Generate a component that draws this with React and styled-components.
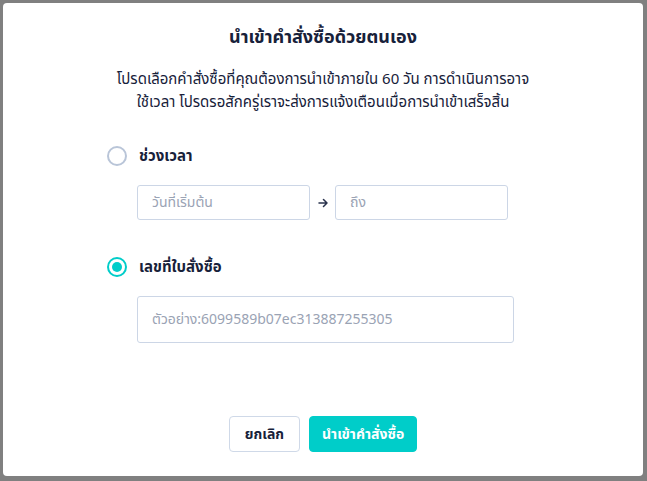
import { useState } from 'react';
import styled, { createGlobalStyle } from 'styled-components';

const GlobalStyle = createGlobalStyle`
  html, body {
    margin: 0;
    padding: 0;
    background: #808080;
  }
  body {
    font-family: "Noto Sans Thai", "Noto Sans", "DejaVu Sans", sans-serif;
    color: #17213a;
  }
  * { box-sizing: border-box; }
`;

const Overlay = styled.div`
  width: 647px;
  height: 481px;
  padding: 3px 4px 5px 3px;
  display: flex;
`;

const Modal = styled.div`
  flex: 1;
  background: #fff;
  border-radius: 4px;
  display: flex;
  flex-direction: column;
  padding: 23px 0 24px;
`;

const Title = styled.h2`
  margin: 0;
  font-size: 18px;
  line-height: 24px;
  font-weight: 700;
  text-align: center;
`;

const Description = styled.p`
  margin: 18px 0 0;
  font-size: 15px;
  line-height: 23px;
  text-align: center;
`;

const Form = styled.div`
  margin-top: 30px;
  padding-left: 104px;
  display: flex;
  flex-direction: column;
`;

const OptionRow = styled.label`
  display: flex;
  align-items: center;
  gap: 12px;
  height: 24px;
  margin-top: ${p => p.$gap || 0}px;
  font-size: 15px;
  font-weight: 700;
  cursor: pointer;
`;

const Radio = styled.span`
  width: 20px;
  height: 20px;
  border-radius: 50%;
  border: 2px solid ${p => (p.$checked ? '#00cdc9' : '#b9c5d8')};
  display: flex;
  align-items: center;
  justify-content: center;
  &::after {
    content: '';
    width: 10px;
    height: 10px;
    border-radius: 50%;
    background: #00cdc9;
    display: ${p => (p.$checked ? 'block' : 'none')};
  }
`;

const FieldRow = styled.div`
  display: flex;
  align-items: center;
  margin: 17px 0 0 30px;
`;

const Input = styled.input`
  width: ${p => p.$width}px;
  height: ${p => p.$height}px;
  border: 1px solid #ccd6e6;
  border-radius: 3px;
  padding: 0 14px;
  font-family: inherit;
  font-size: 14px;
  color: #17213a;
  outline: none;
  &::placeholder {
    color: #9aa3b4;
  }
`;

const Arrow = styled.span`
  width: 25px;
  display: flex;
  justify-content: center;
  color: #2a334d;
`;

const Footer = styled.div`
  margin-top: auto;
  display: flex;
  justify-content: center;
  gap: 9px;
`;

const Button = styled.button`
  height: 36px;
  padding: 0 ${p => (p.$primary ? 12 : 15)}px;
  border-radius: 4px;
  font-family: inherit;
  font-size: 14px;
  font-weight: 700;
  cursor: pointer;
  border: 1px solid ${p => (p.$primary ? '#00cdc9' : '#cfd9e8')};
  background: ${p => (p.$primary ? '#00cdc9' : '#fff')};
  color: ${p => (p.$primary ? '#fff' : '#17213a')};
`;

export default function App() {
  const [mode, setMode] = useState('order');

  return (
    <>
      <GlobalStyle />
      <Overlay>
        <Modal>
          <Title>นำเข้าคำสั่งซื้อด้วยตนเอง</Title>
          <Description>
            โปรดเลือกคำสั่งซื้อที่คุณต้องการนำเข้าภายใน 60 วัน การดำเนินการอาจ
            <br />
            ใช้เวลา โปรดรอสักครู่เราจะส่งการแจ้งเตือนเมื่อการนำเข้าเสร็จสิ้น
          </Description>
          <Form>
            <OptionRow onClick={() => setMode('range')}>
              <Radio $checked={mode === 'range'} />
              ช่วงเวลา
            </OptionRow>
            <FieldRow>
              <Input $width={173} $height={35} placeholder="วันที่เริ่มต้น" />
              <Arrow>
                <svg width="10" height="10" viewBox="0 0 10 10" fill="none" stroke="currentColor" strokeWidth="1.5" strokeLinecap="round" strokeLinejoin="round">
                  <path d="M1 5h8M5.5 1.5L9 5 5.5 8.5" />
                </svg>
              </Arrow>
              <Input $width={173} $height={35} placeholder="ถึง" />
            </FieldRow>
            <OptionRow $gap={35} onClick={() => setMode('order')}>
              <Radio $checked={mode === 'order'} />
              เลขที่ใบสั่งซื้อ
            </OptionRow>
            <FieldRow>
              <Input $width={377} $height={47} placeholder="ตัวอย่าง:6099589b07ec313887255305" />
            </FieldRow>
          </Form>
          <Footer>
            <Button>ยกเลิก</Button>
            <Button $primary>นำเข้าคำสั่งซื้อ</Button>
          </Footer>
        </Modal>
      </Overlay>
    </>
  );
}
